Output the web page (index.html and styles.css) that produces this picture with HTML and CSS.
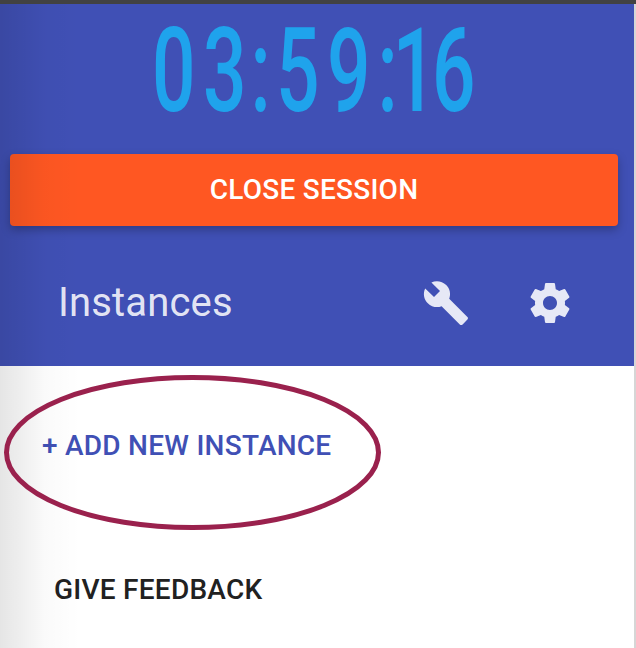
FILE: index.html
```html
<!DOCTYPE html>
<html lang="en">
<head>
<meta charset="utf-8">
<title>Session</title>
<link rel="stylesheet" href="styles.css">
</head>
<body>
<div class="window">
  <aside class="sidebar">
    <header class="session">
      <svg class="clock" viewBox="0 0 634 138" role="timer">
        <text transform="scale(.66 1)" y="107.5" x="230.3 307.6 379.5 418 495.5 571.8 595 654.5">03:59:16</text>
      </svg>
      <button class="close">CLOSE SESSION</button>
      <div class="toolbar">
        <h1>Instances</h1>
        <svg class="icon" viewBox="0 0 24 24"><path d="M22.7 19l-9.1-9.1c.9-2.3.4-5-1.5-6.9-2-2-5-2.4-7.4-1.3L9 6 6 9 1.6 4.7C.4 7.1.9 10.1 2.9 12.1c1.9 1.9 4.6 2.4 6.9 1.5l9.1 9.1c.4.4 1 .4 1.4 0l2.3-2.3c.5-.4.5-1.1.1-1.4z"/></svg>
        <svg class="icon" viewBox="0 0 24 24"><path d="M19.43 12.98c.04-.32.07-.64.07-.98s-.03-.66-.07-.98l2.11-1.65c.19-.15.24-.42.12-.64l-2-3.46c-.12-.22-.39-.3-.61-.22l-2.49 1c-.52-.4-1.08-.73-1.69-.98l-.38-2.65C14.46 2.18 14.25 2 14 2h-4c-.25 0-.46.18-.49.42l-.38 2.65c-.61.25-1.17.59-1.69.98l-2.49-1c-.23-.09-.49 0-.61.22l-2 3.46c-.13.22-.07.49.12.64l2.11 1.65c-.04.32-.07.65-.07.98s.03.66.07.98l-2.11 1.65c-.19.15-.24.42-.12.64l2 3.46c.12.22.39.3.61.22l2.49-1c.52.4 1.08.73 1.69.98l.38 2.65c.03.24.24.42.49.42h4c.25 0 .46-.18.49-.42l.38-2.65c.61-.25 1.17-.59 1.69-.98l2.49 1c.23.09.49 0 .61-.22l2-3.46c.12-.22.07-.49-.12-.64l-2.11-1.65zM12 15.5c-1.93 0-3.5-1.57-3.5-3.5s1.57-3.5 3.5-3.5 3.5 1.57 3.5 3.5-1.57 3.5-3.5 3.5z"/></svg>
      </div>
    </header>
    <nav class="actions">
      <a class="add">+ ADD NEW INSTANCE</a>
      <a class="feedback">GIVE FEEDBACK</a>
    </nav>
  </aside>
  <div class="shade"></div>
  <svg class="highlight" viewBox="0 0 380 156"><ellipse cx="189.5" cy="77.5" rx="186" ry="75"/></svg>
</div>
</body>
</html>
```
FILE: styles.css
```css
* { box-sizing: border-box; }
body { margin: 0; font-family: Roboto, sans-serif; }
.window {
  position: relative;
  width: 636px;
  height: 648px;
  overflow: hidden;
  border-top: 4px solid #424242;
  background: #fff;
}
.sidebar {
  height: 644px;
  border-right: 2px solid #d6d6d6;
}
.session {
  height: 362px;
  background: #4050b5;
}
.clock {
  display: block;
  width: 634px;
  height: 138px;
}
.clock text {
  font: 500 116px Roboto, sans-serif;
  fill: #1fa3ec;
}
.close {
  display: block;
  width: 608px;
  height: 72px;
  margin: 12px 0 0 10px;
  padding: 0;
  border: 0;
  border-radius: 4px;
  background: #ff5722;
  box-shadow: 0 4px 10px rgba(0, 0, 0, .26);
  color: #fff;
  font: 500 28px/72px Roboto, sans-serif;
  letter-spacing: .25px;
}
.toolbar {
  display: flex;
  align-items: center;
  gap: 56px;
  height: 128px;
  margin-top: 13px;
  padding: 0 60px 0 58px;
  color: rgba(255, 255, 255, .87);
}
.toolbar h1 {
  flex: 1;
  margin: 0;
  font-size: 40px;
  font-weight: 400;
  line-height: 48px;
  letter-spacing: .15px;
}
.icon {
  width: 48px;
  height: 48px;
  fill: currentColor;
}
.actions {
  display: flex;
  flex-direction: column;
  gap: 72px;
  padding-top: 44px;
  font-size: 28px;
  font-weight: 500;
  line-height: 72px;
  letter-spacing: .25px;
}
.add {
  padding-left: 42px;
  color: #4050b5;
}
.feedback {
  padding-left: 54px;
  color: #212121;
}
.shade {
  position: absolute;
  inset: 0 auto 0 0;
  width: 80px;
  background: linear-gradient(to right, rgba(0, 0, 0, .1), rgba(0, 0, 0, .065) 20px, rgba(0, 0, 0, .02) 45px, transparent);
  pointer-events: none;
}
.highlight {
  position: absolute;
  left: 3px;
  top: 371px;
  width: 380px;
  height: 156px;
  fill: none;
  stroke: #9a214d;
  stroke-width: 5;
}
```
